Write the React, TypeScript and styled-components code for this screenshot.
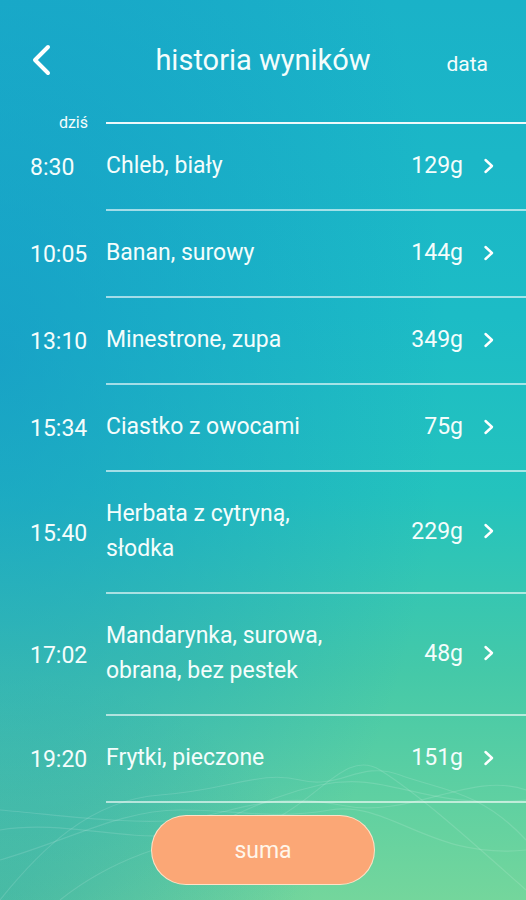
import React from 'react';
import styled, { createGlobalStyle } from 'styled-components';

const GlobalStyle = createGlobalStyle`
    html, body {
        margin: 0;
        padding: 0;
    }
    body {
        font-family: Roboto, "Liberation Sans", sans-serif;
        -webkit-font-smoothing: antialiased;
    }
`;

interface Entry {
    time: string;
    name: string[];
    weight: string;
}

const entries: Entry[] = [
    { time: '8:30', name: ['Chleb, biały'], weight: '129g' },
    { time: '10:05', name: ['Banan, surowy'], weight: '144g' },
    { time: '13:10', name: ['Minestrone, zupa'], weight: '349g' },
    { time: '15:34', name: ['Ciastko z owocami'], weight: '75g' },
    { time: '15:40', name: ['Herbata z cytryną,', 'słodka'], weight: '229g' },
    { time: '17:02', name: ['Mandarynka, surowa,', 'obrana, bez pestek'], weight: '48g' },
    { time: '19:20', name: ['Frytki, pieczone'], weight: '151g' },
];

// blue bleeds in from the left edge, teal/green fades down the page
const Screen = styled.div`
    position: relative;
    width: 526px;
    height: 900px;
    overflow: hidden;
    color: #f4fdfc;
    background:
        radial-gradient(ellipse 85% 80% at 0% 40%, rgba(20, 145, 200, 0.6), rgba(20, 145, 200, 0) 100%),
        radial-gradient(ellipse 60% 25% at 0% 100%, rgba(40, 170, 160, 0.45), rgba(40, 170, 160, 0) 100%),
        linear-gradient(180deg, #1ab2c8 0%, #1cbcc6 35%, #24c3bd 55%, #45c9a8 75%, #74d69c 100%);
    display: flex;
    flex-direction: column;
`;

const Waves = styled.svg`
    position: absolute;
    left: 0;
    bottom: 0;
    width: 526px;
    height: 150px;
    pointer-events: none;
`;

const Header = styled.header`
    height: 122px;
    display: grid;
    grid-template-columns: 1fr auto 1fr;
    align-items: start;
    padding-top: 43px;
    box-sizing: border-box;
`;

const BackButton = styled.button`
    justify-self: start;
    margin-left: 30px;
    margin-top: 1px;
    padding: 0;
    border: none;
    background: none;
    width: 26px;
    height: 32px;
    cursor: pointer;
    display: flex;
    align-items: center;
`;

const Title = styled.h1`
    margin: 0;
    font-size: 29px;
    font-weight: 400;
    line-height: 34px;
`;

const DateLink = styled.span`
    justify-self: end;
    margin-right: 38px;
    margin-top: 7px;
    font-size: 21px;
    line-height: 28px;
`;

const DayHeader = styled.div`
    display: flex;
    align-items: center;
    height: 2px;
`;

const DayLabel = styled.span`
    width: 106px;
    box-sizing: border-box;
    padding-right: 18px;
    text-align: right;
    font-size: 16px;
    line-height: 2px;
`;

const DayLine = styled.div`
    flex: 1;
    height: 2px;
    background: rgba(255, 255, 255, 0.92);
`;

const Row = styled.div`
    display: flex;
    align-items: stretch;
`;

const Time = styled.span`
    width: 106px;
    box-sizing: border-box;
    padding-left: 30px;
    display: flex;
    align-items: center;
    font-size: 23px;
`;

const RowBody = styled.div`
    flex: 1;
    display: flex;
    align-items: center;
    padding: 24px 0 26px;
    border-bottom: 2px solid rgba(255, 255, 255, 0.6);
`;

const Name = styled.div`
    flex: 1;
    font-size: 23px;
    line-height: 35px;
`;

const Weight = styled.span`
    font-size: 23px;
    margin-right: 20px;
`;

const Chevron = styled.svg`
    width: 12px;
    height: 16px;
    margin-right: 31px;
`;

const Footer = styled.div`
    display: flex;
    justify-content: center;
    padding-top: 12px;
    position: relative;
`;

const SumButton = styled.button`
    width: 224px;
    height: 70px;
    border-radius: 35px;
    border: 1.5px solid rgba(255, 236, 214, 0.85);
    background: #fba776;
    color: #fff6ea;
    font-family: Roboto, "Liberation Sans", sans-serif;
    font-size: 23px;
    cursor: pointer;
`;

function App() {
    return (
        <>
            <GlobalStyle />
            <Screen>
                <Waves viewBox="0 0 526 150" fill="none" stroke="rgba(255,255,255,0.13)" strokeWidth="1.2">
                    <path d="M0 150 C 40 100, 90 50, 160 45 S 260 20, 300 30 S 360 10, 400 25 S 480 40, 526 90" />
                    <path d="M0 80 C 60 70, 120 90, 170 85 S 250 50, 320 35 S 420 60, 526 50" />
                    <path d="M0 110 C 70 90, 120 60, 180 60 S 270 70, 330 60 S 430 110, 526 100" />
                    <path d="M60 150 C 110 110, 170 90, 240 80 S 340 -5, 380 20 S 470 90, 526 140" />
                    <path d="M0 60 C 60 65, 130 75, 180 70 S 270 40, 340 55 S 470 20, 526 40" />
                </Waves>
                <Header>
                    <BackButton aria-label="wstecz">
                        <svg width="22" height="32" viewBox="0 0 22 32">
                            <path d="M18 3 L5 16 L18 29" fill="none" stroke="#fff" strokeWidth="4" strokeLinecap="round" strokeLinejoin="round" />
                        </svg>
                    </BackButton>
                    <Title>historia wyników</Title>
                    <DateLink>data</DateLink>
                </Header>
                <DayHeader>
                    <DayLabel>dziś</DayLabel>
                    <DayLine />
                </DayHeader>
                {entries.map((entry) => (
                    <Row key={entry.time}>
                        <Time>{entry.time}</Time>
                        <RowBody>
                            <Name>
                                {entry.name.map((line) => <div key={line}>{line}</div>)}
                            </Name>
                            <Weight>{entry.weight}</Weight>
                            <Chevron viewBox="0 0 12 16">
                                <path d="M2.5 2 L9 8 L2.5 14" fill="none" stroke="#fff" strokeWidth="2.4" strokeLinecap="round" strokeLinejoin="round" />
                            </Chevron>
                        </RowBody>
                    </Row>
                ))}
                <Footer>
                    <SumButton>suma</SumButton>
                </Footer>
            </Screen>
        </>
    );
}

export default App;
